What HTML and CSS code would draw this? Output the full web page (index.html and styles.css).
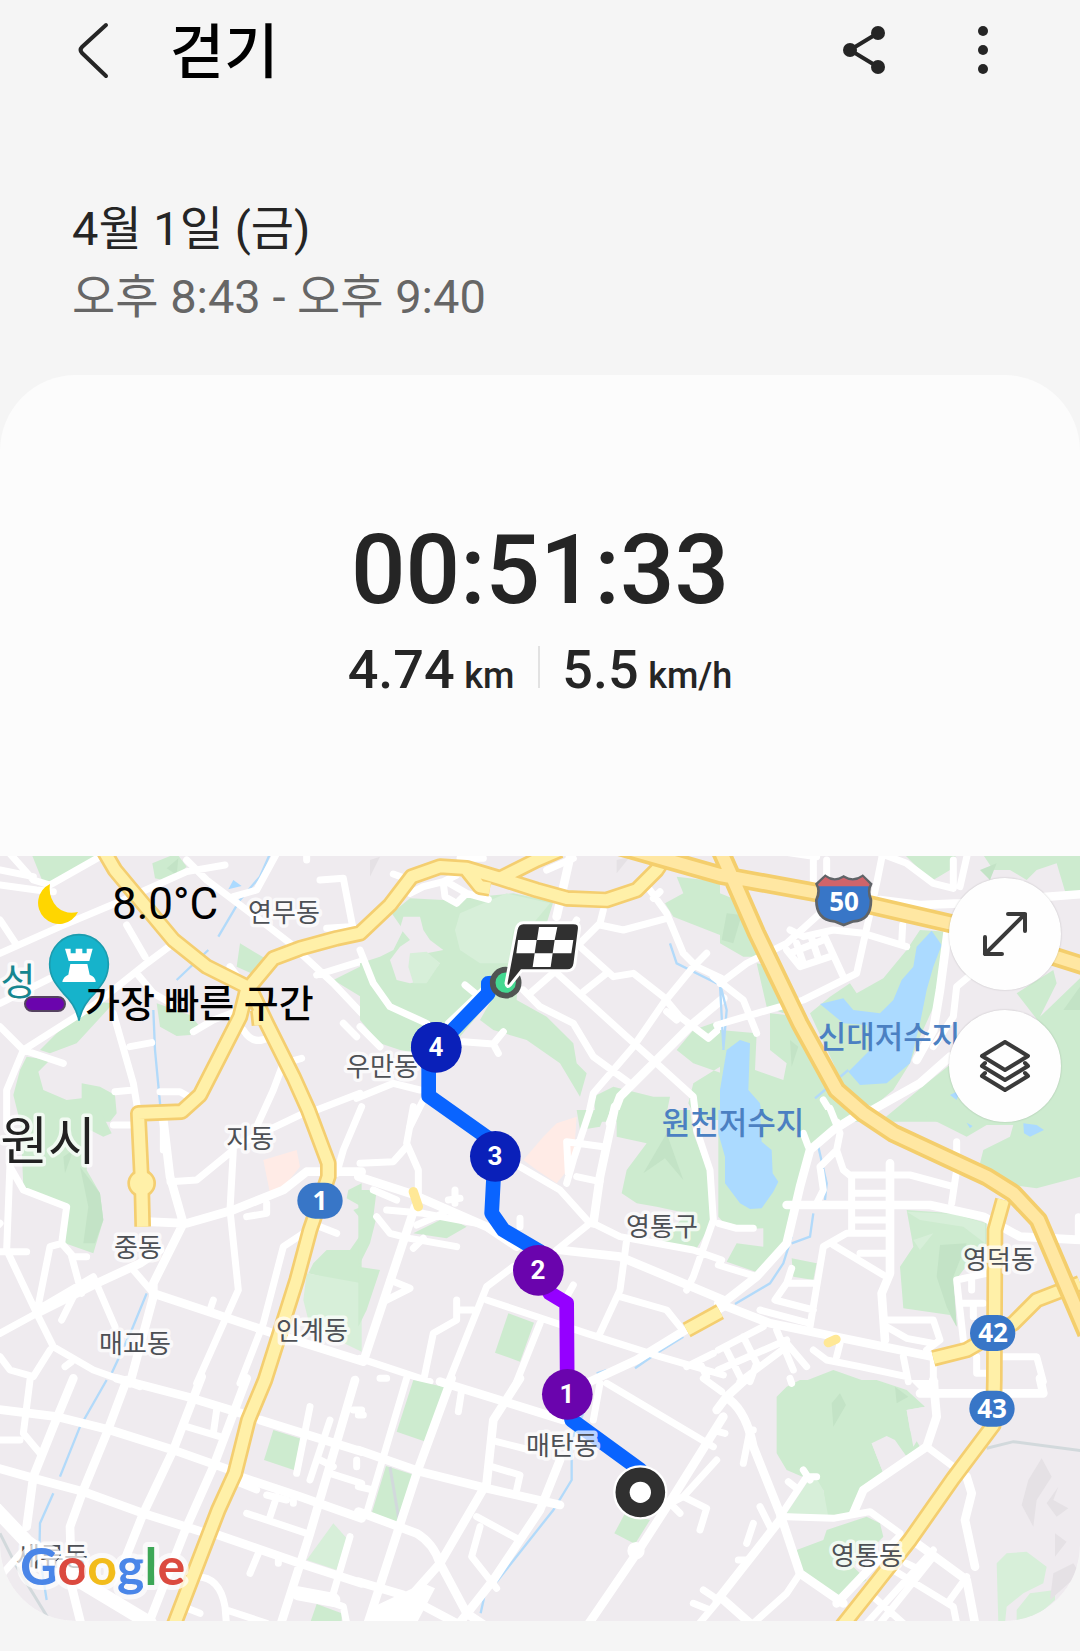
FILE: index.html
```html
<!DOCTYPE html>
<html lang="ko">
<head>
<meta charset="utf-8">
<meta name="viewport" content="width=device-width, initial-scale=1">
<title>걷기</title>
<link rel="stylesheet" href="styles.css">
</head>
<body>
<header class="bar">
  <button class="icon-button" type="button" aria-label="뒤로">
    <svg width="56" height="60" viewBox="0 0 56 60"><path class="chevron" d="M42 5 18 27Q15 30 18 33L42 56"/></svg>
  </button>
  <h1 class="title">걷기</h1>
  <button class="icon-button" type="button" aria-label="공유">
    <svg width="60" height="60" viewBox="0 0 60 60"><path class="share-line" d="M44 13 16 30 44 47"/><circle cx="44" cy="13" r="7"/><circle cx="16" cy="30" r="7"/><circle cx="44" cy="47" r="7"/></svg>
  </button>
  <button class="icon-button" type="button" aria-label="더보기">
    <svg width="60" height="60" viewBox="0 0 60 60"><circle cx="30" cy="11" r="5"/><circle cx="30" cy="30" r="5"/><circle cx="30" cy="49" r="5"/></svg>
  </button>
</header>
<main>
  <section class="when">
    <p class="date">4월 1일 (금)</p>
    <p class="hours">오후 8:43 - 오후 9:40</p>
  </section>
  <article class="card">
    <section class="summary">
      <p class="duration">00:51:33</p>
      <div class="metrics">
        <p class="metric">4.74 <span class="unit">km</span></p>
        <p class="metric">5.5 <span class="unit">km/h</span></p>
      </div>
    </section>
    <section class="map">
      <svg class="map-canvas" viewBox="0 0 1080 765" role="img" aria-label="걷기 경로 지도">
        <rect class="land" width="1080" height="765"/>
        <g transform="translate(0 -6) scale(.33333)">
          <!-- north west -->
          <g>
            <path class="park" d="M90 0H320L150 105 130 100ZM457 40 530 10 560 50 510 95 465 85ZM720 280 795 325 765 375 710 350ZM1000 390 1090 345V445ZM340 460 230 580 150 610 120 600 200 520 290 455ZM80 620 150 630 115 665 130 720 200 750 245 745V700L300 710 345 735 350 790 330 815H60L40 735 60 660ZM470 460 570 495 600 530 570 555 530 558 480 530Z"/>
            <path class="park-dark" d="M500 55 535 25 530 75Z"/>
            <path class="water" d="M700 90 725 108 685 118Z"/>
            <path class="stream" d="M815 0 780 80 720 150 655 260M625 300 530 390M460 480 465 600 482 780"/>
            <path class="road" d="M0 60 100 80M0 105 110 120 160 125M20 0 100 90 150 105 300 20M0 310 180 230 370 150 560 65 675 45M0 210 50 285M380 225 435 320M0 460 150 385M0 530 70 600 190 640M70 600 290 460 440 340 520 280M70 600 20 720V815M410 370 460 430 530 470M340 490 400 700 415 790M390 590 455 578M345 725 400 720M480 725H540L575 745M560 30 620 90 780 210 870 280 1000 400 1085 490M830 10 770 120 700 140M960 90 1030 85 1060 240M980 235 1050 230M690 350 720 390M580 545 640 510 720 480M730 540Q760 590 810 560M905 625 850 640 820 720 770 830M1080 730 950 780M1030 520 1070 560M950 375 1080 335M920 0V30"/>
          </g>
          <!-- north -->
          <g transform="translate(1080 0)">
            <path class="park" d="M95 190 150 145 250 150 460 130 580 155 560 220 480 250 470 450 560 500 640 580 650 640 680 670 660 740 600 640 500 570 400 540 360 510 400 440 300 560 230 620 120 600 60 580 0 510V340L60 320 100 300 130 240ZM950 80 1080 95V255L940 200 915 160 970 130ZM1085 510 1000 540 950 600 1000 640 1085 670V810H1010L985 760 1000 700 1080 650ZM710 815 700 740 760 710 880 740H930L920 790 860 815Z"/>
            <path class="park-light" d="M300 190 440 130 570 160 520 220 460 240 445 340H360L300 300 285 240Z"/>
            <path class="land" d="M130 200 180 200 190 240 210 270 250 300 200 310 240 340 200 390 150 400 110 390 90 330 120 290 150 270 120 235Z"/>
            <path class="park-light" d="M150 310 200 305 240 340 200 400 160 400 145 350Z"/>
            <path class="hill" d="M30 30 60 20 30 80ZM770 30 810 20 770 70Z"/>
            <path class="stream" d="M930 280 950 340 1080 405"/>
            <path class="road" d="M560 60 640 25M150 130 190 110 250 95 290 75M250 100 255 140 290 160 320 130 385 148M260 95 320 130M100 72 150 90M0 300 40 400 90 470 200 520M0 530 60 590M315 405 370 450M265 520 370 420M310 575 400 582 430 545M400 582 415 610M300 25H370M320 30V45M730 180 720 220 660 280M650 210 620 260M720 225 790 240 920 205M870 120 920 190 970 310 1010 350 1085 385M900 125 880 145M1040 310 1000 350 910 460 820 590 700 730 680 820M660 290 760 380 820 370 910 440 960 500 1045 565 1085 530M920 485 950 510M670 425 740 370M580 360 800 560 890 640 1000 740 1010 820M490 420 540 470 640 520 700 620 810 700M510 430 590 360M-10 745 100 700 180 720M190 750 150 830"/>
            <path class="road wide" d="M635 0 590 200M1090 445 1000 520 880 640 780 740 750 820"/>
          </g>
          <!-- north east -->
          <g transform="translate(2160 0)">
            <path class="park" d="M0 130 50 150 130 320 70 320 0 280ZM110 340 160 350 210 460 190 490 140 470ZM390 400 410 430 490 385 560 300 600 240 680 245 650 450 600 560 570 640 520 720 460 770 380 740 340 640 270 490 330 440ZM550 10H710L690 60 640 90 600 60ZM780 0H1080V140H1040L1010 40 950 60 920 90 870 60 820 60ZM890 430 1000 360 1010 400 960 500 1085 380V815H480L620 700 720 620 960 520ZM0 540 110 550 105 660 190 690 200 640 150 600V490L250 500 400 760 470 815H0Z"/>
            <path class="park-dark" d="M20 190 65 195 40 280 5 270ZM780 60 830 40 810 90ZM1080 410V480H1030ZM210 570 235 590 215 650Z"/>
            <path class="water" d="M590 290 635 242 665 285 640 350 620 420 600 520 570 640 500 700 420 705 385 665 450 600 440 525 370 520 300 462 370 445 400 480 480 490 520 450 545 390 580 350ZM20 600 60 570 90 580 85 720 120 760 130 820H0V720ZM690 735 720 720 710 750Z"/>
            <path class="stream" d="M385 660 285 745M0 400 20 480 10 600M0 405 10 590"/>
            <path class="road" d="M490 0 470 100 430 280 410 370 370 390 250 450 110 490 -10 525M480 10 560 40 640 100 700 115M745 0 720 110M210 240 250 260 340 240 430 250 560 290M548 225 545 280M310 250 370 380M0 400 80 340 200 280 300 190M200 300 240 350 330 320M230 280 250 340M275 265 295 325M210 310 310 270M-20 380 70 450 110 550M640 590 700 500 710 410 770 360M310 750 350 815M150 0 290 20M280 30V100M320 30V90M700 30V110"/>
            <path class="road wide" d="M685 230 660 420 640 540 590 630M480 150 600 165 720 160 1090 132M440 790 600 700 690 620"/>
          </g>
          <!-- west -->
          <g transform="translate(0 780)">
            <path class="park" d="M60 0H300L335 70 310 80 270 60 260 180 300 250 310 330 280 430 195 400 205 290 70 230ZM1085 220 1045 240 1040 265 1085 290ZM1060 300 1085 290V330ZM980 420H1050L1085 370V530L925 490 940 460Z"/>
            <path class="park-light" d="M920 490 1085 520V725L930 650 910 570Z"/>
            <path class="park-dark" d="M240 170 300 250 310 330 285 400 250 400 265 290ZM190 140 220 120 195 190Z"/>
            <path class="quarter" d="M790 150 890 120 900 170 860 220 810 250Z"/>
            <path class="stream" d="M440 550 395 660 335 790"/>
            <path class="road" d="M30 160 20 420 110 610 160 710 280 780 420 830M30 170 70 240 200 290 185 400 220 440H260M185 400 150 410 110 610M0 425H80M215 440 245 550M0 670 110 610M110 600 280 500 345 650M185 630 220 560M510 215 590 210 700 120 690 300 715 540 590 820M700 110 910 10M340 45H410M490 120V30M740 320 800 310V280M-10 350 0 340M400 480 460 550M1085 -10 1030 120 1010 190M910 370 850 410 790 640 720 820M960 350 1010 370M640 570 630 600M0 740 30 780 100 800 150 720M215 755 195 770"/>
            <path class="road wide" d="M110 610 290 520 420 460 480 420M490 30 510 200 550 340 460 520 460 560 390 820M440 335 560 340 700 300 850 240 920 185 1085 185M460 550 820 670 1090 755"/>
          </g>
          <!-- centre -->
          <g transform="translate(1080 780)">
            <path class="park" d="M-5 240 50 240 40 320-5 300ZM-5 290 50 320 30 400-5 470 60 480 20 600-5 650ZM160 370 260 320 320 350 260 385ZM445 610 522 638 480 755 405 728ZM650 0H740L720 50 660 60ZM770 0H990L1000 70 1050 200 1060 330 1010 415 900 400 980 310 890 290 830 280 785 250 800 180 860 100 770 80Z"/>
            <path class="park-dark" d="M850 190 920 70 970 210 915 145Z"/>
            <path class="quarter" d="M490 150 550 80 590 40 650 20 640 160 590 220 530 180Z"/>
            <path class="stream" d="M970 680 890 730 825 775M740 780 710 790"/>
            <path class="road" d="M160-10 140 100 175 180V290M0 160 100 155 140 110M40 240 110 270M50 320 90 370 150 385 290 410M80 300 190 310 350 340M170 345 250 310M90 510 150 535 80 570M190 385 160 415M285 240V280M265 270 300 265M480 325V350M0 745 210 815M290 570V630L220 670 190 815M290 600H340M460 470 380 530 260 830M380 570 680 670 900 740 1090 795M470 815 540 640M480 170 600 240 690 340 590 420M690 0 640 150 620 220M620 95 730 110M620 95 625 190M650 200 720 215M1010 60 1050 180 1060 330 1000 500 980 540M700 340 780 380 1000 420 1085 450M800 390 780 540 715 680M780 560 920 600 960 650M640 525 620 560M980 770 1060 730M1020 760 1040 800"/>
            <path class="road wide" d="M-5 200 150 250 380 350 470 410M165 290 15 740M600 420 780 440 1090 570M765-10 720 200 700 340M1090 590 830 750 690 815"/>
          </g>
          <!-- east -->
          <g transform="translate(2160 780)">
            <path class="park" d="M-5 0H380L270 120 200 380 120 490 20 455 50 400 130 410V355L30 360-5 320ZM570 0H1080V200L950 235 880 225 780 160 790 120 870 80 880 45 800 45 740 80 700 60 640 30ZM560 300 700 310 800 340V400L730 480 700 520 710 650 690 615 550 595 540 470 580 410ZM215 445 290 460 280 510 220 500ZM250 815 340 780 440 815Z"/>
            <path class="park-light" d="M560 305 700 312 795 340V400L730 350 600 330ZM580 390 640 370 600 420Z"/>
            <path class="park-dark" d="M660 405 740 400 700 500 710 650 680 590 650 500Z"/>
            <path class="water" d="M-5 0H120L125 95 155 120 158 190 175 215 160 245 125 295 90 297 60 280 15 220V140L-5 70ZM910 40 950 45 972 60 930 80 912 70ZM740 38 758 48 750 55ZM1025 35 1042 46Z"/>
            <path class="stream" d="M295 110 320 220 315 270M280 310 270 380 215 400M215 380 190 460 150 520 45 582"/>
            <path class="road" d="M250 70 265 110M330-5 360 70 350 120 300 170 310 240 290 280M350 120 370 180 395 200V370M395 195H570L700 230M400 250H510M400 330H510M510 370H380L310 410 270 650M340 405 490 495M420 430H500M-5 340 50 355H100M-5 465 110 500M710 95V180L695 280M215 475 200 520H290M200 520 165 570 280 600M120 600 270 640M500 630H640L660 690 620 720M500 650 560 685 640 700M800 490 710 510 720 600 730 690M755 500V540M720 580H790M760 580V620M770 740V790H800M840 740H950L970 815M-5 720 130 650M-5 780 200 690M20 720 60 800M70 680 110 760 90 815M170 660 220 780M200 700 260 770M280 720 320 750 420 770 560 800M200 710 60 815M360 700 350 740M550 740 565 815M640 740V815M1075 320V390"/>
            <path class="road wide" d="M420 10 340 60 270 120 240 230 200 400 110 500-5 590M-5 580 150 640 660 745M200 285H630L790 320 900 380 1090 390M510 160V490L485 550 495 690"/>
          </g>
          <!-- south west -->
          <g transform="translate(0 1590)">
            <path class="park" d="M820 150 915 180 888 272 792 240ZM950 672 1025 700V730H930Z"/>
            <path class="park-light" d="M1000 430 1040 475 1010 570 920 540Z"/>
            <path class="boundary" d="M0 460 50 560 160 740"/>
            <path class="stream" d="M320 0 240 140 180 290M160 340 120 430 118 520 140 660"/>
            <path class="road" d="M90 0 70 160 120 220M0 180H60M650 90 640 160M560 140 660 170M0 590 80 500M930 80 890 280M990 120 930 300M720 310 770 330M800 345 860 360M880 360V370M830 350 810 410M740 400 920 460M775 520 750 580M835 540V550M990 280 1085 310M590 590Q660 590 675 680L680 740M550 680 600 700M680 690 800 730M1050 470 1000 640M890 630 1030 680 1040 730M960 240 1000 260M1060 90H1085M1070 240V260"/>
            <path class="road wide" d="M-5 88 170 110 330 150 520 210 690 270M350-5 560 50 740 105M220-5 160 140 100 290 80 440M380 0 320 160 250 330 210 440 215 620 245 740M-5 265 120 300 250 335 430 400 620 460M605-10 520 210 430 400 370 550M740-5 640 260 560 440 450 720M780 120 1085 215M1065 0 930 460 840 740M720 290 900 350 1085 415M640 460 900 550 1085 610"/>
            <path class="road avenue" d="M-10 390 80 485 250 610 450 730M895 640 1000 660"/>
          </g>
          <!-- south -->
          <g transform="translate(1080 1590)">
            <path class="park" d="M160 0 255 22 197 185 110 155ZM78 258 163 285 115 428 35 400ZM795 400 870 420 825 492 763 460Z"/>
            <path class="boundary" d="M90 262 118 425"/>
            <path class="stream" d="M670 100 635 180V300L580 390 410 605M375 640 362 700"/>
            <path class="road" d="M305 30 295 95M410 185 510 210M395 260 480 285 470 330M350 410 470 475M360 440 335 530 410 625M720 10 700 120M740 10 1060 200M1030-5 1085 35M970 350 1040 385 1020 450M1070 240 970 350 930 370 960 400M1030 630 1060 650M1000 670 1050 690M1085 650 1010 740M-5 320 40 330M140-5 20 400M-5 105H10M60-5H80"/>
            <path class="road wide" d="M275-5 170 280 20 740M-5 210 180 275 380 325 600 375M240 5 450 70 610 120M480-5 400 120 380 310 240 550 160 640M600 240 540 390 400 600 290 740M-5 395 170 460Q220 490 240 550L320 700 380 740M-5 605 130 645 290 730M1090 110 940 350 830 520 680 740"/>
            <path class="blob" d="M40 680 190 610 225 625 170 730H25ZM802 512A26 26 0 1 0 854 512 26 26 0 1 0 802 512Z"/>
          </g>
          <!-- south east -->
          <g transform="translate(2160 1590)">
            <path class="park" d="M170 50 200 20 240 0H470L560 30 615 80 560 90 570 150 600 200 560 230 520 180 455 190 490 280 420 330 400 400 320 410 310 330 270 300 200 270 170 220ZM230 510 310 480 320 450 440 410 480 430 490 470 400 560 440 600 360 650 250 590Z"/>
            <path class="park-light" d="M280 280 310 330 325 410 200 400ZM830 550 860 520 920 515 980 560 970 610 910 640 860 680 855 730H835ZM890 690 930 640 1005 630V660L960 700 890 730Z"/>
            <path class="park-dark" d="M335 70 360 40 378 75 340 140ZM525 20 565 50 530 70Z"/>
            <path class="land" d="M455 190 500 168 525 180 560 230 490 280ZM560 90 615 80 630 120 580 200Z"/>
            <path class="hill" d="M965 235 995 290 950 360 940 440 905 375 925 300ZM1015 320 1000 360 1045 385 1010 410 980 370ZM1005 460 1040 485 1005 530ZM1000 580 1060 550 1080 580 990 660Z"/>
            <path class="boundary" d="M800 205 880 185 1085 212"/>
            <path class="road" d="M90 150 70 250M100 150H85M-5 155 15 160M180 410 260 290 290 290M205 305 230 325M250 270 270 300M120 380 150 440M100 430 80 490M200 410 340 415 450 395 540 460M620 200 700 260M240 580 200 640 100 730M440 730 640 510M520 570 700 680 710 730M640 530 560 630 480 730M460 650 550 730M690 660 740 590M600 570 560 550M210-5 215 10M55 540H80"/>
            <path class="road wide" d="M-10 90 20 50 80-5M30 60Q80 100 100 200L180 400 240 580 370 670M180 420 0 650 90 730M0 650-10 660M400 400 430 330 620 200 650 110 640 0M600 40H970L960-5M740 290 755 340 735 420 765 560M590 490 740 600 765 730M350 670 540 470"/>
            <path class="blob" d="M570 0H655V50H620Z"/>
          </g>
          <!-- main roads -->
          <g class="casing">
            <path d="M310 0 345 60 420 150 520 270 620 350 750 415 800 520 880 680 925 780 985 940V980L930 1140 890 1290 795 1590 745 1710 705 1870 655 1980 520 2330M745 415 820 325 900 295 1010 265 1080 250 1170 165 1235 80 1320 50 1400 55 1500 85 1610 120 1700 145 1820 150 1910 120 1970 60 2010 0M1500 85 1610 30 1680 0M1400 60 1440 110 1470 115M740 420 720 500 600 735 545 785 415 790 425 1000 428 1130M775 480 780 525"/>
            <path d="M3010 1050 2985 1140 2983 1590 2980 1725 2860 1885 2730 2070 2620 2210 2525 2330M2800 1525 2900 1500 3040 1420 3110 1350 3240 1300M2060 1440 2160 1385"/>
            <circle cx="425" cy="1000" r="18"/>
          </g>
          <g class="main-road">
            <path d="M310 0 345 60 420 150 520 270 620 350 750 415 800 520 880 680 925 780 985 940V980L930 1140 890 1290 795 1590 745 1710 705 1870 655 1980 520 2330M745 415 820 325 900 295 1010 265 1080 250 1170 165 1235 80 1320 50 1400 55 1500 85 1610 120 1700 145 1820 150 1910 120 1970 60 2010 0M1500 85 1610 30 1680 0M1400 60 1440 110 1470 115M740 420 720 500 600 735 545 785 415 790 425 1000 428 1130M775 480 780 525"/>
            <path d="M3010 1050 2985 1140 2983 1590 2980 1725 2860 1885 2730 2070 2620 2210 2525 2330M2800 1525 2900 1500 3040 1420 3110 1350 3240 1300M2060 1440 2160 1385"/>
            <circle cx="425" cy="1000" r="18"/>
          </g>
          <path class="underpass" d="M2485 1478 2508 1468M1240 1025 1255 1070"/>
          <path class="highway-casing" d="M1860-10 2160 75 2460 130 2850 220 3260 350M2160 0 2200 90 2270 250 2400 520 2510 720 2590 790 2680 850 2960 980 3040 1030 3115 1110 3260 1450"/>
          <path class="highway" d="M1860-10 2160 75 2460 130 2850 220 3260 350M2160 0 2200 90 2270 250 2400 520 2510 720 2590 790 2680 850 2960 980 3040 1030 3115 1110 3260 1450"/>
          <!-- walked route -->
          <path class="route" d="M1517 398 1465 400V430L1320 580 1286 650V738L1486 880 1480 995 1475 1090 1510 1140 1620 1205M1702 1633 1715 1710 1921 1860"/>
          <path class="route fast" d="M1615 1261 1650 1330 1700 1360 1702 1633"/>
          <circle class="badge" cx="1309" cy="592" r="76"/>
          <circle class="badge" cx="1486" cy="919" r="76"/>
          <circle class="badge fast-badge" cx="1615" cy="1261" r="76"/>
          <circle class="badge fast-badge" cx="1702" cy="1633" r="76"/>
          <circle class="marker-ring" cx="1921" cy="1927" r="78"/>
          <circle class="white" cx="1921" cy="1927" r="32"/>
          <circle class="goal" cx="1517" cy="398" r="39"/>
          <g transform="translate(1080 0)">
            <path class="flag" d="M490 218H640Q661 218 658 238L645 340Q642 362 622 362H485L451 405Q440 416 438 400L468 240Q472 218 490 218Z"/>
            <path class="white" d="M537 231H592L584 270H531ZM474 270H530L524 310H469ZM584 270H640L634 310H578ZM524 310H578L572 351H518Z"/>
          </g>
          <!-- castle pin -->
          <path class="pin" d="M237 512Q228 465 190 430C165 400 149 380 149 342A88 88 0 0 1 325 342C325 380 309 400 284 430Q246 465 237 512Z"/>
          <path class="white" d="M195 296H212V310H227V296H247V310H260V296H278L268 333H206ZM211 342H262L269 374Q286 380 287 396H187Q190 380 205 374Z"/>
          <!-- road shields -->
          <g transform="translate(2160 0)">
            <path class="shield" d="M316 78Q342 98 371 80 400 98 428 78L453 102Q442 122 453 150 453 212 400 214L371 225 343 214Q289 210 289 150 302 122 290 102Z"/>
            <path class="shield-top" d="M316 81Q342 101 371 83 400 101 428 81L449 103 447 109H296L294 103Z"/>
          </g>
          <rect class="route-sign" x="892" y="998" width="136" height="108" rx="54"/>
          <rect class="route-sign" x="2910" y="1395" width="136" height="108" rx="54"/>
          <rect class="route-sign" x="2908" y="1622" width="136" height="108" rx="54"/>
        </g>
        <g class="place">
          <text x="284" y="66">연무동</text><text x="382" y="220">우만동</text><text x="250" y="292">지동</text><text x="138" y="401">중동</text><text x="135" y="497">매교동</text><text x="312" y="484">인계동</text><text x="662" y="380">영통구</text><text x="999" y="413">영덕동</text><text x="867" y="709">영통동</text><text x="562" y="599">매탄동</text><text x="52" y="710">세류동</text>
          <text class="city" x="48" y="304">원시</text>
          <text class="sight" x="18" y="139">성</text>
        </g>
        <g class="lake">
          <text x="889" y="192">신대저수지</text><text x="733" y="278">원천저수지</text>
        </g>
        <circle class="badge" cx="436" cy="191" r="25"/>
        <g class="number">
          <text x="436" y="200">4</text><text x="495" y="309">3</text><text x="538" y="423">2</text><text x="567" y="547">1</text>
        </g>
        <g class="number sign-number">
          <text x="844" y="55">50</text><text x="320" y="354">1</text><text x="993" y="486">42</text><text x="992" y="562">43</text>
        </g>
        <text class="logo" x="20" y="729"><tspan class="g-blue">G</tspan><tspan class="g-red">o</tspan><tspan class="g-yellow">o</tspan><tspan class="g-blue">g</tspan><tspan class="g-green">l</tspan><tspan class="g-red">e</tspan></text>
      </svg>
      <div class="overlay">
        <div class="notes">
          <p class="weather">
            <svg width="44" height="44" viewBox="0 0 44 44"><path class="moon" d="M14 2A21 21 0 1 0 42 30Q30 33 21 25 12 15 14 2Z"/></svg>
            8.0°C
          </p>
          <p class="legend"><span class="swatch"></span>가장 빠른 구간</p>
        </div>
        <div class="controls">
          <button class="round" type="button" aria-label="지도 확대">
            <svg width="52" height="52" viewBox="0 0 52 52"><path d="M6 46 46 6M29 6H46V23M6 29V46H23"/></svg>
          </button>
          <button class="round" type="button" aria-label="지도 유형">
            <svg width="52" height="52" viewBox="0 0 52 52"><path d="M26 2 49 16 26 30 3 16ZM6 23 3 26 26 40 49 26 46 23M6 33 3 36 26 50 49 36 46 33"/></svg>
          </button>
        </div>
      </div>
    </section>
  </article>
</main>
</body>
</html>
```
FILE: styles.css
```css
* { box-sizing: border-box; }
body {
  margin: 0;
  background: #f5f5f5;
  color: #252525;
  font-family: Roboto, "Noto Sans CJK KR", sans-serif;
}
h1, p { margin: 0; }
button { border: 0; padding: 0; background: none; color: inherit; cursor: pointer; }
svg { display: block; }

.bar { display: flex; align-items: center; height: 100px; padding: 0 67px 0 64px; }
.icon-button { fill: #252525; }
.chevron, .share-line { fill: none; stroke: #252525; stroke-width: 4; stroke-linecap: round; }
.title {
  flex: 1;
  padding: 6px 0 0 50px;
  color: #000;
  font-size: 59px;
  font-weight: 500;
  line-height: 80px;
}
.icon-button:last-child { margin-left: 59px; }

.when { padding: 95px 72px 44px; font-size: 47px; line-height: 68px; }
.hours { color: #666; }

.card { border-radius: 76px; overflow: hidden; background: #fcfcfc; margin-bottom: 30px; }
.summary {
  display: flex;
  flex-direction: column;
  align-items: center;
  padding: 139px 20px 148px;
  font-weight: 500;
}
.duration { font-size: 96px; line-height: 112px; }
.metrics { display: flex; align-items: center; margin-top: 12px; }
.metric { font-size: 54px; line-height: 64px; white-space: nowrap; }
.metric + .metric::before {
  content: "";
  display: inline-block;
  width: 2px;
  height: 42px;
  margin: 0 22px 0 24px;
  background: #e2e2e2;
}
.unit { font-size: 36px; margin-left: -4px; }

.map { position: relative; }
.map-canvas { width: 100%; height: auto; }
.land { fill: #efebef; }
.park { fill: #cdebcf; }
.park-light { fill: #d7efd9; }
.park-dark { fill: #c3e3c6; }
.hill { fill: #e5e1e5; }
.quarter { fill: #ffebe6; }
.water { fill: #abdaff; }
.stream { fill: none; stroke: #b2dafa; stroke-width: 7; }
.boundary { fill: none; stroke: #d2d9dc; stroke-width: 9; }
.road { fill: none; stroke: #fff; stroke-width: 21; stroke-linecap: round; stroke-linejoin: round; }
.wide { stroke-width: 26; }
.avenue { stroke-width: 42; }
.blob, .white { fill: #fff; }
.casing, .main-road, .highway, .highway-casing { fill: none; stroke-linejoin: round; }
.casing { stroke: #f4ce70; stroke-width: 50; }
.main-road { stroke: #fff0a8; stroke-width: 34; }
.underpass { fill: none; stroke: #ffe896; stroke-width: 28; stroke-linecap: round; }
.highway-casing { stroke: #f4ce6c; stroke-width: 58; }
.highway { stroke: #ffe7a2; stroke-width: 36; }
.route { fill: none; stroke: #0964ff; stroke-width: 44; stroke-linejoin: round; stroke-linecap: round; }
.fast { stroke: #9500ff; }
.badge { fill: #0a20b9; }
.fast-badge { fill: #6a04ad; }
.marker-ring { fill: #303030; stroke: #fff; stroke-width: 7; }
.goal { fill: #43d991; stroke: #505452; stroke-width: 17; }
.flag { fill: #303030; stroke: #fff; stroke-width: 9; }
.pin { fill: #16b3cb; stroke: #1b9cae; stroke-width: 5; }
.shield { fill: #3876c7; stroke: #606468; stroke-width: 8; }
.shield-top { fill: #d0646a; }
.route-sign { fill: #3876c7; }

.place {
  font-family: "Noto Sans CJK KR", sans-serif;
  font-size: 26px;
  text-anchor: middle;
  fill: #4d5055;
  stroke: rgba(255, 255, 255, .72);
  stroke-width: 7px;
  stroke-linejoin: round;
  paint-order: stroke;
}
.city { font-size: 52px; fill: #222; }
.sight { font-size: 38px; fill: #16868f; }
.lake { font-family: "Noto Sans CJK KR", sans-serif; font-size: 31px; font-weight: 500; text-anchor: middle; fill: #4b80c2; }
.number { font-family: Roboto, sans-serif; font-size: 26px; font-weight: 700; text-anchor: middle; fill: #fff; }
.sign-number { font-family: "Open Sans", sans-serif; }
.logo {
  font-family: Lato, sans-serif;
  font-size: 52px;
  font-weight: 700;
  stroke: rgba(255, 255, 255, .7);
  stroke-width: 10px;
  stroke-linejoin: round;
  paint-order: stroke;
}
.g-blue { fill: #4a86e8; }
.g-red { fill: #db4a3f; }
.g-yellow { fill: #f2bc1c; }
.g-green { fill: #3da757; }

.overlay {
  position: absolute;
  inset: 0;
  display: flex;
  justify-content: space-between;
  align-items: flex-start;
  padding: 22px 19px 0 24px;
  color: #000;
}
.weather { display: flex; align-items: center; gap: 32px; padding-left: 12px; font-size: 44px; line-height: 52px; }
.moon { fill: #ffd600; }
.legend { display: flex; align-items: center; gap: 19px; margin-top: 46px; font-size: 38px; font-weight: 500; line-height: 56px; }
.swatch { width: 42px; height: 16px; border: 2px solid #54425f; border-radius: 8px; background: #6a04ad; }
.controls { display: flex; flex-direction: column; gap: 20px; }
.round {
  display: grid;
  place-items: center;
  width: 112px;
  height: 112px;
  border-radius: 50%;
  background: #fefefe;
  box-shadow: 0 0 2px rgba(0, 0, 0, .2);
}
.round path { fill: none; stroke: #3a3a3a; stroke-width: 4; stroke-linejoin: round; stroke-linecap: round; }
```
